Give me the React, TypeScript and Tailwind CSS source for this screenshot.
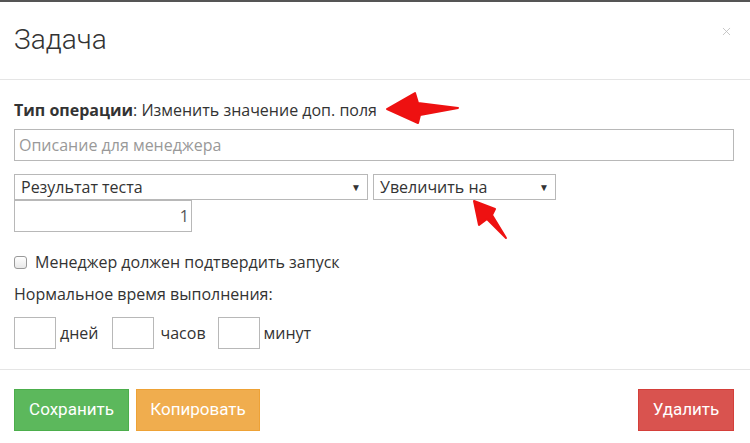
import { X } from 'lucide-react';

export default function App() {
  return (
    <div className="relative w-[750px] h-[443px] overflow-hidden bg-white text-[#333] font-['Open_Sans',sans-serif]">
      <div className="h-[2px] bg-[#555]" />

      {/* header */}
      <div className="flex h-[78px] items-center justify-between border-b border-[#e5e5e5] pl-[14px] pr-[17px]">
        <h1 className="font-['Roboto',sans-serif] text-[28px] font-light leading-none text-[#333] -mt-[2px]">Задача</h1>
        <X size={13} strokeWidth={1.5} className="text-[#bbb] -mt-[18px]" />
      </div>

      {/* body */}
      <div className="px-[14px] pt-[19px] pb-[20px] text-[16px]">
        <p className="leading-[22px]">
          <b className="font-bold">Тип операции</b>: Изменить значение доп. поля
        </p>
        <div className="mt-[8px] flex h-[32px] w-[720px] items-center border border-[#b8b8b8] px-[4px] text-[#999]">
          Описание для менеджера
        </div>
        <div className="mt-[13px] flex gap-[5px]">
          <div className="flex h-[26px] w-[354px] items-center justify-between border border-[#b8b8b8] pl-[6px] pr-[6px]">
            <span>Результат теста</span>
            <span className="text-[10px]">▼</span>
          </div>
          <div className="flex h-[26px] w-[183px] items-center justify-between border border-[#b8b8b8] pl-[6px] pr-[6px]">
            <span>Увеличить на</span>
            <span className="text-[10px]">▼</span>
          </div>
        </div>
        <div className="flex h-[32px] w-[178px] items-center justify-end border border-[#b8b8b8] pr-[2px] text-[#555]">
          1
        </div>

        <label className="mt-[19px] flex items-center gap-[8px] leading-[22px]">
          <span className="h-[13px] w-[13px] rounded-[3px] border border-[#999] bg-gradient-to-b from-white to-[#e8e8e8]" />
          <span>Менеджер должен подтвердить запуск</span>
        </label>
        <p className="mt-[10px] leading-[22px]">Нормальное время выполнения:</p>
        <div className="mt-[12px] flex items-center">
          <div className="h-[32px] w-[42px] border border-[#b8b8b8]" />
          <span className="ml-[4px] mr-[14px]">дней</span>
          <div className="h-[32px] w-[42px] border border-[#b8b8b8]" />
          <span className="ml-[6px] mr-[12px]">часов</span>
          <div className="h-[32px] w-[42px] border border-[#b8b8b8]" />
          <span className="ml-[4px]">минут</span>
        </div>
      </div>

      {/* footer */}
      <div className="flex items-center justify-between border-t border-[#e5e5e5] pl-[14px] pr-[16px] pt-[19px] font-['Roboto',sans-serif] text-[17px] text-white">
        <div className="flex gap-[7px]">
          <button className="h-[42px] w-[115px] border border-[#4cae4c] bg-[#5cb85c]">Сохранить</button>
          <button className="h-[42px] w-[124px] border border-[#eea236] bg-[#f0ad4e]">Копировать</button>
        </div>
        <button className="h-[42px] w-[96px] border border-[#d43f3a] bg-[#d9534f]">Удалить</button>
      </div>

      {/* annotation arrows */}
      <svg className="pointer-events-none absolute left-0 top-0" width="750" height="443">
        <polygon points="387,109 415,93 418,103 458,108 420,115 418,123" fill="#ee1111" strokeLinejoin="round" stroke="#ee1111" strokeWidth="2" />
        <polygon points="474,201 495,209 492,215 506,238 487,219 479,225" fill="#ee1111" strokeLinejoin="round" stroke="#ee1111" strokeWidth="2" />
      </svg>
    </div>
  );
}
